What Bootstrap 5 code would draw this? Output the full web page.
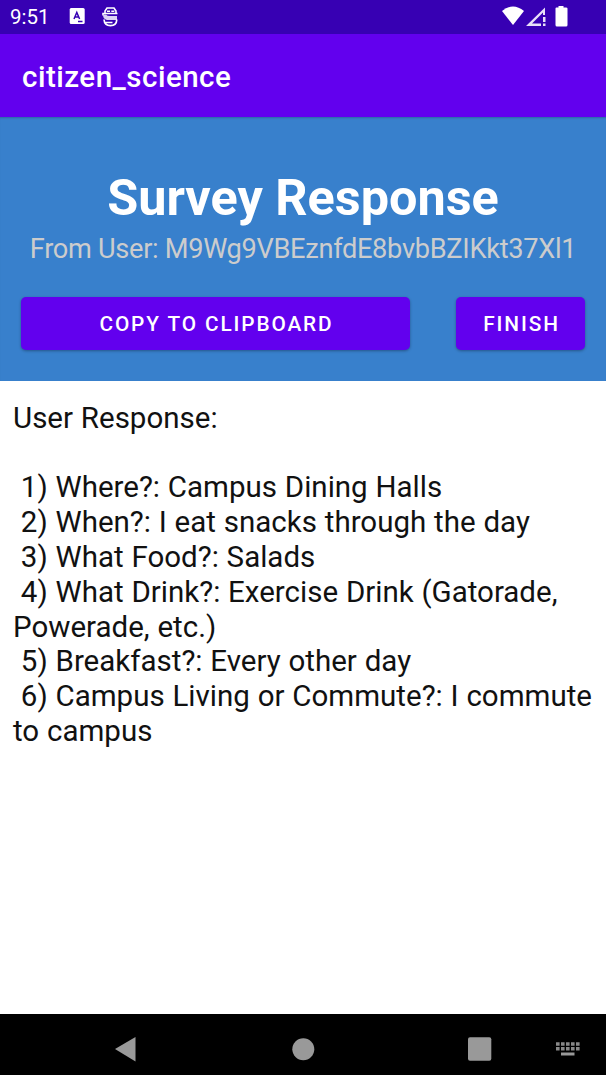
<!DOCTYPE html>
<html lang="en">
<head>
<meta charset="utf-8">
<meta name="viewport" content="width=device-width, initial-scale=1">
<title>citizen_science</title>
<link href="https://cdn.jsdelivr.net/npm/bootstrap@5.3.0/dist/css/bootstrap.min.css" rel="stylesheet">
<style>
body{font-family:Roboto,"Liberation Sans",sans-serif;color:#111;background:#fff}
.status-strip{height:34px;background:#3700b3;color:#fff;font-size:20.5px;line-height:34px;padding:0 38px 0 10px;flex:none}
.notif-icons{margin-left:19px}
.app-bar{height:83px;background:#6200ee;padding:4px 22px 0;flex:none}
.app-title{color:#fff;font-size:29.5px;font-weight:500;line-height:1;letter-spacing:.5px}
.survey-head{height:264px;background:#3880cc;padding:52px 21px 0;box-shadow:inset 0 2px 2px -1px #0003;flex:none}
.survey-head h1{font-size:50.4px;line-height:58px;font-weight:700;color:#fff}
.from-user{font-size:27.2px;line-height:31px;color:#ccc;white-space:nowrap;letter-spacing:-.31px;margin:7px -12px 0}
.action-row{gap:46px;margin-top:32px}
.btn-act{height:53px;background:#6200ee;color:#fff;border:0;border-radius:5px;font-size:20.8px;font-weight:500;letter-spacing:1.88px;padding:2px 0 0 2px;box-shadow:0 1px 3px #0005}
.btn-act:hover{background:#6f1bef;color:#fff}
.btn-finish{width:129px;flex:none}
.responses{font-size:29.5px;line-height:34.85px;white-space:pre-wrap;word-spacing:.5px;padding:19.5px 0 0 13px}
.nav-strip{height:61px;background:#000;flex:none}
</style>
</head>
<body>
<div class="d-flex flex-column vh-100 overflow-hidden">
  <header class="status-strip d-flex align-items-center">
    <span>9:51</span>
    <svg class="notif-icons" width="52" height="24" viewBox="0 0 52 24">
      <rect x=".7" y="3" width="15" height="16" rx="1.5" fill="#fff"/>
      <path d="M5 14 7.800 7.500 10.600 14M6 12h3.600M9 16.500h4.500" fill="none" stroke="#3700b3" stroke-width="1.500"/>
      <path d="M36 9V6l2-3h7l2 3v3M34 10.500V8.500h14.500M38 6.300h3M42.300 6.300h3" fill="none" stroke="#fff" stroke-width="1.600"/>
      <path d="M34 9.500h3q1 1.500 4 1.500h7v4H38q-4-1-4-5.500Z" fill="#ddd3f5"/>
      <path d="M35 14.500q.5 6.200 6.500 6.200t6.300-6.200M36.500 17.500h7" fill="none" stroke="#fff" stroke-width="1.700"/>
    </svg>
    <svg class="ms-auto" width="68" height="24" viewBox="500 5 68 24">
      <path d="M502 11q11-9 22 0L513 25Z" fill="#fff"/>
      <path d="M526 26 545 7.500V15h-2v-2.500L532 23.500h9V26ZM543 17h2.500v5H543Zm0 6.500h2.500V26H543Z" fill="#e8e0f8"/>
      <path d="M555.500 8.500q0-1 1-1h2V6h5v1.500h2.500q1.500 0 1.500 1V25q0 1.500-1.500 1.500H557q-1.500 0-1.500-1.500Z" fill="#fff"/>
    </svg>
  </header>
  <nav class="app-bar d-flex align-items-center"><span class="app-title">citizen_science</span></nav>
  <section class="survey-head">
    <h1 class="text-center mb-0">Survey Response</h1>
    <p class="from-user text-center mb-0">From User: M9Wg9VBEznfdE8bvbBZIKkt37Xl1</p>
    <div class="action-row d-flex">
      <button class="btn btn-act flex-grow-1" type="button">COPY TO CLIPBOARD</button>
      <button class="btn btn-act btn-finish" type="button">FINISH</button>
    </div>
  </section>
  <main class="responses flex-grow-1">User Response:

 1) Where?: Campus Dining Halls
 2) When?: I eat snacks through the day
 3) What Food?: Salads
 4) What Drink?: Exercise Drink (Gatorade, Powerade, etc.)
 5) Breakfast?: Every other day
 6) Campus Living or Commute?: I commute to campus</main>
  <footer class="nav-strip">
    <svg class="d-block" width="606" height="61" viewBox="0 1014 606 61" fill="#999">
      <path d="M115 1049 135.500 1037v24.500Z"/>
      <circle cx="303.300" cy="1049.300" r="11"/>
      <rect x="468" y="1037.300" width="23.300" height="23.400" rx="2"/>
      <path d="M556 1044h24M556 1048.800h24" stroke="#888" stroke-width="3.400" stroke-dasharray="3.600 1.400"/>
      <path d="M561 1052.500h13.500v3H561Z"/>
    </svg>
  </footer>
</div>
<script src="https://cdn.jsdelivr.net/npm/bootstrap@5.3.0/dist/js/bootstrap.bundle.min.js"></script>
</body>
</html>
